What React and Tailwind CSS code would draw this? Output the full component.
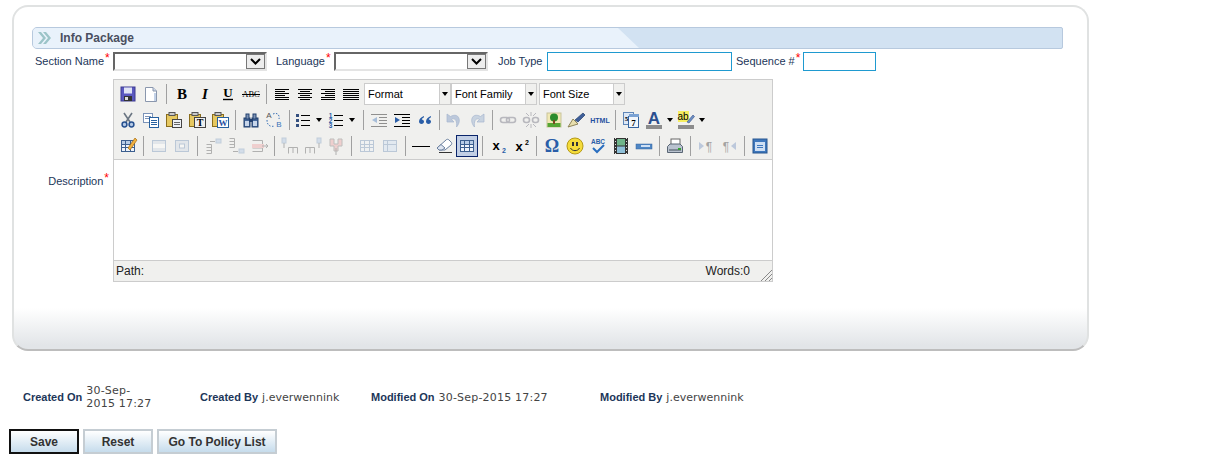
import React from "react";

const Svg = ({ children, off }) => (
  <svg width="20" height="20" viewBox="0 0 20 20" className={off ? "block opacity-40" : "block"}>{children}</svg>
);
const P = (p) => <path fill="none" stroke="#000" strokeWidth="1" {...p} />;
const T = ({ x = 10, y = 15, s = 14, f = "Liberation Serif", w = "bold", i, c = "#000", children, d }) => (
  <text x={x} y={y} textAnchor="middle" fontFamily={`${f}, serif`} fontSize={s} fontWeight={w} fontStyle={i ? "italic" : "normal"} fill={c} textDecoration={d}>{children}</text>
);
const Lines = ({ rows, c = "#000" }) => <P stroke={c} d={rows.map(([a, b, y]) => `M${a} ${y}.5H${b}`).join("")} />;

const Grid = ({ c = "#6e8fb5", hi }) => (
  <g>
    <rect x="3.5" y="4.5" width="13" height="11" fill="#eef3fa" stroke={c} />
    {hi && <rect x="4" y="5" width="12" height="3" fill="#b9cde6" />}
    <P stroke={c} d="M3.5 8.5H16.5M3.5 11.5H16.5M7.5 5V15M12.5 5V15" />
  </g>
);
const Clip = ({ children }) => (
  <g>
    <rect x="2.5" y="4.5" width="11" height="12" fill="#e6c860" stroke="#8a6d1c" />
    <rect x="5" y="2.5" width="6" height="3" fill="#c9c9c9" stroke="#555" />
    {children}
  </g>
);

const icons = {
  save: <Svg><rect x="3" y="3" width="14" height="14" fill="#5a58c0" stroke="#3c3a90" /><rect x="6" y="3.5" width="8" height="6" fill="#dfe3f5" /><rect x="6" y="12" width="8" height="5" fill="#333" /><rect x="7" y="13" width="3" height="3" fill="#ddd" /></Svg>,
  new: <Svg><path d="M4.5 3.500H12L15.500 7V17.500H4.500Z" fill="#fff" stroke="#8a97ad" /><path d="M12 3.500V7H15.500" fill="#cdd8ea" stroke="#8a97ad" /><rect x="13" y="9" width="2" height="8" fill="#c3d2e8" /></Svg>,
  bold: <Svg><T s={15} y={15}>B</T></Svg>,
  italic: <Svg><T s={15} y={15} i>I</T></Svg>,
  under: <Svg><T s={13} y={13}>U</T><P d="M5 15.500H15" strokeWidth="1.4" /></Svg>,
  strike: <Svg><T s={8.5} y={13} w="normal" f="Liberation Serif">ABC</T><P d="M1 10.500H19" /></Svg>,
  left: <Svg><Lines rows={[[3, 17, 5], [3, 13, 7], [3, 17, 9], [3, 13, 11], [3, 17, 13], [3, 17, 15]]} /></Svg>,
  center: <Svg><Lines rows={[[3, 17, 5], [5, 15, 7], [3, 17, 9], [5, 15, 11], [3, 17, 13], [5, 15, 15]]} /></Svg>,
  right: <Svg><Lines rows={[[3, 17, 5], [7, 17, 7], [3, 17, 9], [7, 17, 11], [3, 17, 13], [3, 17, 15]]} /></Svg>,
  justify: <Svg><Lines rows={[[2, 18, 5], [2, 18, 7], [2, 18, 9], [2, 18, 11], [2, 18, 13], [2, 18, 15]]} /></Svg>,
  cut: <Svg><P stroke="#6b7683" strokeWidth="1.6" d="M6 3L12 12M14 3L8 12" /><circle cx="6.500" cy="14.500" r="2.400" fill="#b7cbe6" stroke="#26508f" strokeWidth="1.500" /><circle cx="13.500" cy="14.500" r="2.400" fill="#b7cbe6" stroke="#26508f" strokeWidth="1.500" /></Svg>,
  copy: <Svg><rect x="2.500" y="3.500" width="9" height="9" fill="#fff" stroke="#7b93b8" /><P stroke="#7b93b8" d="M4 6.500H10M4 8.500H10" /><rect x="8.500" y="7.500" width="9" height="10" fill="#fff" stroke="#26609f" /><P stroke="#26609f" d="M10 10.500H16M10 12.500H16M10 14.500H16" /></Svg>,
  paste: <Svg><Clip><rect x="8.500" y="9.500" width="9" height="8" fill="#eef1f6" stroke="#444" /><P stroke="#666" d="M10 12.500H16M10 14.500H16" /></Clip></Svg>,
  pasteT: <Svg><Clip><rect x="7.500" y="7.500" width="11" height="10" fill="#eee" stroke="#444" /><T x={13} y={16} s={10}>T</T></Clip></Svg>,
  pasteW: <Svg><Clip><rect x="7.500" y="7.500" width="11" height="10" fill="#fff" stroke="#26609f" /><T x={13} y={16} s={9} c="#26509f">W</T></Clip></Svg>,
  find: <Svg><rect x="3" y="8" width="6" height="9" fill="#45689c" stroke="#23406e" /><rect x="11" y="8" width="6" height="9" fill="#45689c" stroke="#23406e" /><rect x="5" y="4" width="3" height="5" fill="#7d93b5" stroke="#23406e" /><rect x="12" y="4" width="3" height="5" fill="#7d93b5" stroke="#23406e" /><rect x="8" y="9" width="4" height="3" fill="#23406e" /><rect x="4" y="11" width="4" height="5" fill="#c8d6ea" /><rect x="12" y="11" width="4" height="5" fill="#c8d6ea" /></Svg>,
  replace: <Svg><T x={5} y={8} s={8} w="normal" f="Liberation Sans" c="#555">A</T><T x={15} y={17} s={8} w="normal" f="Liberation Sans" c="#3b73b8">B</T><P stroke="#3b73b8" strokeDasharray="1.5 1.5" d="M3 10C3 16 7 17 11 16M9 4C13 2 16 5 15 9" /></Svg>,
  ul: <Svg><rect x="3" y="4" width="3" height="3" fill="#35507f" /><rect x="3" y="9" width="3" height="3" fill="#35507f" /><rect x="3" y="14" width="3" height="3" fill="#35507f" /><Lines rows={[[8, 17, 5], [8, 17, 10], [8, 17, 15]]} /></Svg>,
  ol: <Svg><T x={4.5} y={8} s={6.5} c="#2a5ea8" f="Liberation Sans">1</T><T x={4.5} y={13} s={6.5} c="#2a5ea8" f="Liberation Sans">2</T><T x={4.5} y={18} s={6.5} c="#2a5ea8" f="Liberation Sans">3</T><Lines rows={[[8, 17, 5], [8, 17, 10], [8, 17, 15]]} /></Svg>,
  outdent: <Svg off><Lines rows={[[2, 18, 4], [10, 18, 7], [10, 18, 10], [10, 18, 13], [2, 18, 16]]} /><path d="M8 7V13L3 10Z" fill="#3b73b8" /></Svg>,
  indent: <Svg><Lines rows={[[2, 18, 4], [10, 18, 7], [10, 18, 10], [10, 18, 13], [2, 18, 16]]} /><path d="M3 7V13L8 10Z" fill="#2a5ea8" /></Svg>,
  quote: <Svg><path d="M9 6C6 7 4 9 4 11.500C4 13 5 14 6.500 14C8 14 9 13 9 11.500C9 10.500 8 9.500 6.800 9.500C7 8.500 8 7.800 9 7.300ZM16 6C13 7 11 9 11 11.500C11 13 12 14 13.500 14C15 14 16 13 16 11.500C16 10.500 15 9.500 13.800 9.500C14 8.500 15 7.800 16 7.300Z" fill="#2a5ea8" /></Svg>,
  undo: <Svg off><path d="M3 4V12H10L7.500 9.500C10 7.500 13.500 9.500 12.500 17C18 11 15 2 6.500 6.500Z" fill="#6f8fc0" stroke="#3b62a0" strokeWidth=".7" /></Svg>,
  redo: <Svg off><path d="M17 4V12H10L12.500 9.500C10 7.500 6.500 9.500 7.500 17C2 11 5 2 13.500 6.500Z" fill="#8fa8cc" stroke="#3b62a0" strokeWidth=".7" /></Svg>,
  link: <Svg off><rect x="2.500" y="7.500" width="9" height="5" rx="2.500" fill="none" stroke="#667" strokeWidth="1.6" /><rect x="8.500" y="7.500" width="9" height="5" rx="2.500" fill="none" stroke="#667" strokeWidth="1.6" /></Svg>,
  unlink: <Svg off><rect x="2.500" y="7.500" width="6" height="5" rx="2.500" fill="none" stroke="#667" strokeWidth="1.6" /><rect x="11.500" y="7.500" width="6" height="5" rx="2.500" fill="none" stroke="#667" strokeWidth="1.6" /><P stroke="#667" d="M10 2V6M10 14V18M5 3L8 6M15 3L12 6M5 17L8 14M15 17L12 14" /></Svg>,
  image: <Svg><rect x="3" y="3" width="14" height="14" fill="#f1e9b5" stroke="#c9c49c" /><rect x="3.500" y="13" width="13" height="4" fill="#55a534" /><circle cx="10" cy="7.500" r="4" fill="#2c8c2c" /><rect x="9" y="10" width="2" height="4" fill="#7a4b20" /></Svg>,
  clean: <Svg><path d="M1 17L6 9L11 14Z" fill="#e8dfae" stroke="#8f855a" /><path d="M8 10L16 3L18 5L11 12Z" fill="#3f5f9a" stroke="#23406e" strokeWidth=".7" /></Svg>,
  html: <Svg><T y={12.5} s={7} c="#1f4f9f" f="Liberation Sans">HTML</T></Svg>,
  date: <Svg><rect x="2.500" y="2.500" width="10" height="12" fill="#dce8f6" stroke="#5f86b8" /><rect x="7.500" y="6.500" width="10" height="11" fill="#f2f6fb" stroke="#35649f" /><rect x="8" y="4" width="10" height="3" fill="#7aa2d4" /><T x={12.5} y={16} s={9}>7</T><T x={5.5} y={11} s={7}>5</T></Svg>,
  color: <Svg><T y={14} s={17} c="#2b4f8f" f="Liberation Sans">A</T><rect x="2" y="15" width="16" height="4" fill="#8c8c8c" /></Svg>,
  bg: <Svg><rect x="2" y="1" width="11" height="11" fill="#f6ee60" /><T x={7} y={10} s={10} w="normal" f="Liberation Sans">ab</T><path d="M11 12L17 5L18.500 6.500L13 13Z" fill="#6d8fc4" stroke="#35508a" strokeWidth=".6" /><rect x="2" y="15" width="16" height="4" fill="#8c8c8c" /></Svg>,
  tableEdit: <Svg><Grid c="#3c5f8f" hi /><path d="M10 12L17 2L19 4L12 14Z" fill="#f0b040" stroke="#a86d10" strokeWidth=".7" /></Svg>,
  rowProps: <Svg off><rect x="3.500" y="4.500" width="13" height="11" fill="#cfd8e6" stroke="#6e8fb5" /><rect x="4" y="8" width="12" height="4" fill="#fff" /></Svg>,
  cellProps: <Svg off><rect x="3.500" y="4.500" width="13" height="11" fill="#cfd8e6" stroke="#6e8fb5" /><rect x="7.500" y="8" width="5" height="4" fill="#fff" stroke="#6e8fb5" /></Svg>,
  rowBefore: <Svg off><P stroke="#555" d="M3.500 8.500H8.500V17.500H3.500M3.500 11.500H8.500M3.500 14.500H8.500" /><rect x="13" y="3" width="5" height="4" fill="#a9c3e2" stroke="#7f9cc0" /><P stroke="#555" d="M7 5.500H12" /></Svg>,
  rowAfter: <Svg off><P stroke="#555" d="M3.500 2.500H8.500V11.500H3.500M3.500 5.500H8.500M3.500 8.500H8.500" /><rect x="13" y="13" width="5" height="4" fill="#a9c3e2" stroke="#7f9cc0" /><P stroke="#555" d="M7 15.500H12" /></Svg>,
  rowDel: <Svg off><P stroke="#555" d="M3.500 4.500H13.500V15.500H3.500M3.500 8.500H13.500M3.500 12H13.500" /><rect x="3" y="8" width="12" height="4" fill="#efa0a0" /><P stroke="#555" d="M13 10H19M17 8L19 10L17 12" /></Svg>,
  colBefore: <Svg off><rect x="2" y="2" width="4" height="5" fill="#a9c3e2" stroke="#7f9cc0" /><P stroke="#555" d="M4 7V12M8.500 17.500V11.500H17.500V17.500M13 12V17" /></Svg>,
  colAfter: <Svg off><rect x="14" y="2" width="4" height="5" fill="#a9c3e2" stroke="#7f9cc0" /><P stroke="#555" d="M16 7V12M2.500 17.500V11.500H11.500V17.500M7 12V17" /></Svg>,
  colDel: <Svg off><path d="M4 3H8V8H12V3H16V10H12V15H8V10H4Z" fill="#efa0a0" stroke="#777" /><P stroke="#555" d="M10 12V19" /></Svg>,
  split: <Svg off><Grid /></Svg>,
  merge: <Svg off><rect x="3.500" y="4.500" width="13" height="11" fill="#cfe0f4" stroke="#6e8fb5" /><P stroke="#6e8fb5" d="M7.500 5V15M4 8.500H16" /></Svg>,
  hr: <Svg><P d="M1 10.500H19" /></Svg>,
  erase: <Svg><path d="M3 12L12 4C13 3 14 3 15 4L17 6C18 7 18 8 17 9L11 14H5Z" fill="#fff" stroke="#6a7f9e" /><path d="M3 12L7 8.500L11 12L8 14H5Z" fill="#dfe6f1" stroke="#6a7f9e" /><P d="M5 16.500H18" stroke="#333" /></Svg>,
  visual: <Svg><Grid c="#3c5f8f" hi /></Svg>,
  sub: <Svg><T x={8} y={14} s={13} f="Liberation Sans">x</T><T x={16} y={17} s={7} c="#2a5ea8" f="Liberation Sans">2</T></Svg>,
  sup: <Svg><T x={8} y={15} s={13} f="Liberation Sans">x</T><T x={16} y={9} s={7} f="Liberation Sans">2</T></Svg>,
  omega: <Svg><T s={18} y={16} c="#2a5ea8" f="Liberation Serif">Ω</T></Svg>,
  smile: <Svg><circle cx="10" cy="10" r="8" fill="#f5dc3a" stroke="#b59a16" /><rect x="7" y="6" width="2" height="4" fill="#333" /><rect x="11" y="6" width="2" height="4" fill="#333" /><P stroke="#333" d="M5.500 12C7 15.500 13 15.500 14.500 12" /></Svg>,
  spell: <Svg><T y={7.5} s={6.5} c="#2a5ea8" f="Liberation Sans">ABC</T><P stroke="#2a6fc0" strokeWidth="2" d="M5 12L9 16L16 9" /></Svg>,
  media: <Svg><rect x="3" y="2" width="14" height="16" fill="#333" /><rect x="6" y="3" width="8" height="6.500" fill="#6fb58a" /><rect x="6" y="10.500" width="8" height="6.500" fill="#8fc0d8" /><P stroke="#ddd" strokeDasharray="1 2" d="M4.500 2V18M15.500 2V18" /></Svg>,
  nbsp: <Svg><rect x="2" y="8" width="16" height="5" fill="#4f86c4" stroke="#35649f" strokeWidth=".5" /><rect x="7" y="9" width="9" height="2" fill="#cfe0f4" /></Svg>,
  print: <Svg><rect x="6" y="3" width="9" height="6" fill="#fff" stroke="#666" /><path d="M2.500 10.500L5 8H15L17.500 10.500V16.500H2.500Z" fill="#b9c2cf" stroke="#5a6675" /><rect x="4" y="13" width="12" height="2" fill="#7d8894" /><rect x="13" y="12" width="3" height="2" fill="#35a035" /></Svg>,
  ltr: <Svg off><path d="M3 6V14L8 10Z" fill="#6f8fc0" /><T x={13} y={15} s={12} w="normal" f="Liberation Sans" c="#333">¶</T></Svg>,
  rtl: <Svg off><path d="M17 6V14L12 10Z" fill="#6f8fc0" /><T x={7} y={15} s={12} w="normal" f="Liberation Sans" c="#333">¶</T></Svg>,
  full: <Svg><rect x="3" y="3" width="14" height="14" fill="#3f78bd" stroke="#28568f" /><rect x="5" y="6" width="10" height="9" fill="#cfe0f4" /><P stroke="#3f78bd" d="M7 9.500H13M7 11.500H13" /></Svg>,
};

const Slot = ({ name }) => <div className="flex w-[23px] shrink-0 justify-center">{icons[name]}</div>;
const Sep = ({ w = "w-[8px]" }) => (
  <div className={`flex ${w} shrink-0 justify-center`}>
    <div className="h-[20px] w-px bg-[#a0a0a0]" />
  </div>
);
const Arrow = () => <div className="h-0 w-0 border-x-[3px] border-t-[4px] border-x-transparent border-t-black" />;
const Split = ({ name, w = "w-[33px]", ml = "ml-[-1px]" }) => (
  <div className={`flex ${w} shrink-0 items-center`}>
    <div className={`${ml} flex w-[22px] shrink-0 justify-center`}>{icons[name]}</div>
    <div className="ml-[2px]"><Arrow /></div>
  </div>
);
const Drop = ({ label, w, ml = "" }) => (
  <div className={`flex h-[22px] ${w} ${ml} shrink-0 border border-[#cccccc]`}>
    <div className="flex-1 bg-white pl-[3px] text-[11px] leading-[20px] text-black">{label}</div>
    <div className="flex w-[11px] items-center justify-center border-l border-[#cccccc] bg-[#f0f0ee]"><Arrow /></div>
  </div>
);
const Row = ({ children }) => <div className="flex h-[26px] items-center pl-[2px]">{children}</div>;
const Req = () => <span className="relative top-[-3px] ml-[1px] text-[12px] leading-none text-[#ff0000]">*</span>;
const Label = ({ children, w, req }) => (
  <div className={`${w} shrink-0 whitespace-nowrap text-[11px] text-[#1c3659]`}>{children}{req && <Req />}</div>
);
const FauxSelect = () => (
  <div className="flex h-[19px] w-[154px] shrink-0 justify-end border-2 border-t-[#666666] border-r-[#e4e4e4] border-b-[#e4e4e4] border-l-[#666666] bg-white">
    <div className="flex w-[19px] items-center justify-center border border-[#777777] bg-[#ededed]">
      <svg width="11" height="7" viewBox="0 0 11 7"><path d="M1 1L5.500 5.500L10 1" fill="none" stroke="#000" strokeWidth="2" /></svg>
    </div>
  </div>
);
const Meta = ({ label, w, value, valueW = "", vClass = "" }) => (
  <div className={`flex ${w} shrink-0 items-center`}>
    <span className="whitespace-nowrap font-bold text-[#1c3659]">{label}</span>
    <span className={`ml-[4px] font-['DejaVu_Sans',sans-serif] leading-[13px] text-[#444444] ${valueW} ${vClass}`}>{value}</span>
  </div>
);
const Btn = ({ children, w, dark }) => (
  <button className={`h-[25px] ${w} shrink-0 border-2 bg-gradient-to-b from-white to-[#c6dcec] text-[12px] font-bold text-[#333333] ${dark ? "border-[#111111]" : "border-[#c5cdd3]"}`}>{children}</button>
);

export default function App() {
  return (
    <div className="h-[465px] w-[1216px] overflow-hidden bg-white pt-[5px] font-['Liberation_Sans',Arial,sans-serif]">
      <div className="ml-[12px] h-[346px] w-[1077px] rounded-[16px] border-2 border-[#e0e2e2] border-b-[#bdbdbd] bg-[linear-gradient(to_bottom,#ffffff_88%,#e2e5e8_99%)] pt-[20px] pl-[18px]">
        <div className="flex h-[22px] w-[1031px] overflow-hidden rounded-l-[5px] rounded-r-[2px] border border-[#b7c9de] bg-[#d2e2f2]">
          <div className="flex h-full w-[606px] items-center bg-[#e9f2fb] pl-[5px] [clip-path:polygon(0_0,585px_0,100%_100%,0_100%)]">
            <svg width="13" height="12" viewBox="0 0 13 12"><path d="M0 0L5 6L0 12H3L8 6L3 0ZM5 0L10 6L5 12H8L13 6L8 0Z" fill="#9cc4c8" /></svg>
            <span className="ml-[9px] text-[12px] font-bold text-[#4a4f60]">Info Package</span>
          </div>
        </div>
        <div className="mt-[2px] flex h-[20px] items-center">
          <div className="w-[3px] shrink-0" />
          <Label w="w-[78px]" req>Section Name</Label>
          <FauxSelect />
          <div className="w-[9px] shrink-0" />
          <Label w="w-[58px]" req>Language</Label>
          <FauxSelect />
          <div className="w-[10px] shrink-0" />
          <Label w="w-[49px]">Job Type</Label>
          <div className="h-[19px] w-[185px] shrink-0 border border-[#1f9ad0] bg-white" />
          <div className="w-[4px] shrink-0" />
          <Label w="w-[67px]" req>Sequence #</Label>
          <div className="h-[19px] w-[73px] shrink-0 border border-[#1f9ad0] bg-white" />
        </div>
        <div className="mt-[8px] flex">
          <div className="flex w-[81px] shrink-0 justify-end pt-[94px] pr-[4px]">
            <Label w="">Description<Req /></Label>
          </div>
          <div className="flex h-[203px] w-[660px] shrink-0 flex-col border border-[#cccccc] bg-[#f0f0ee] text-[12px] text-[#222222]">
            <div className="border-b border-[#cccccc] pt-[1px]">
              <Row>
                <Slot name="save" /><Slot name="new" /><Sep />
                <Slot name="bold" /><Slot name="italic" /><Slot name="under" /><Slot name="strike" /><Sep />
                <Slot name="left" /><Slot name="center" /><Slot name="right" /><Slot name="justify" />
                <Drop label="Format" w="w-[87px]" ml="ml-[2px]" />
                <Drop label="Font Family" w="w-[86px]" />
                <Drop label="Font Size" w="w-[86px]" ml="ml-[2px]" />
              </Row>
              <Row>
                <Slot name="cut" /><Slot name="copy" /><Slot name="paste" /><Slot name="pasteT" /><Slot name="pasteW" /><Sep />
                <Slot name="find" /><Slot name="replace" /><Sep />
                <Split name="ul" /><Split name="ol" /><Sep />
                <Slot name="outdent" /><Slot name="indent" /><Slot name="quote" /><Sep w="w-[6px]" />
                <Slot name="undo" /><Slot name="redo" /><Sep />
                <Slot name="link" /><Slot name="unlink" /><Slot name="image" /><Slot name="clean" /><Slot name="html" /><Sep />
                <Slot name="date" /><Split name="color" w="w-[31px]" ml="ml-[1px]" /><Split name="bg" ml="ml-[2px]" />
              </Row>
              <Row>
                <Slot name="tableEdit" /><Sep />
                <Slot name="rowProps" /><Slot name="cellProps" /><Sep />
                <Slot name="rowBefore" /><Slot name="rowAfter" /><Slot name="rowDel" /><Sep />
                <Slot name="colBefore" /><Slot name="colAfter" /><Slot name="colDel" /><Sep />
                <Slot name="split" /><Slot name="merge" /><Sep />
                <Slot name="hr" /><Slot name="erase" />
                <div className="flex w-[23px] shrink-0 justify-center">
                  <div className="border border-[#0a246a] bg-[#c2cfe5]">{icons.visual}</div>
                </div>
                <Sep />
                <Slot name="sub" /><Slot name="sup" /><Sep />
                <Slot name="omega" /><Slot name="smile" /><Slot name="spell" /><Slot name="media" /><Slot name="nbsp" /><Sep />
                <Slot name="print" /><Sep />
                <Slot name="ltr" /><Slot name="rtl" /><Sep />
                <Slot name="full" />
              </Row>
            </div>
            <div className="flex-1 bg-white" />
            <div className="flex h-[21px] shrink-0 items-center justify-between border-t border-[#cccccc] pl-[2px]">
              <span>Path:</span>
              <div className="flex items-center">
                <span>Words:0</span>
                <svg className="ml-[11px] mt-[8px]" width="11" height="11" viewBox="0 0 11 11"><path d="M0 11L11 0M4 11L11 4M8 11L11 8" stroke="#888" fill="none" /></svg>
              </div>
            </div>
          </div>
        </div>
      </div>
      <div className="mt-[32px] flex h-[28px] items-center pl-[23px] text-[11px]">
        <Meta label="Created On" w="w-[177px]" value="30-Sep-2015 17:27" valueW="w-[68px]" vClass="tracking-[0.2px]" />
        <Meta label="Created By" w="w-[171px]" value="j.everwennink" />
        <Meta label="Modified On" w="w-[229px]" value="30-Sep-2015 17:27" vClass="tracking-[0.2px]" />
        <Meta label="Modified By" w="w-[200px]" value="j.everwennink" />
      </div>
      <div className="mt-[18px] flex gap-[4px] pl-[9px]">
        <Btn w="w-[70px]" dark>Save</Btn>
        <Btn w="w-[70px]">Reset</Btn>
        <Btn w="w-[120px]">Go To Policy List</Btn>
      </div>
    </div>
  );
}
